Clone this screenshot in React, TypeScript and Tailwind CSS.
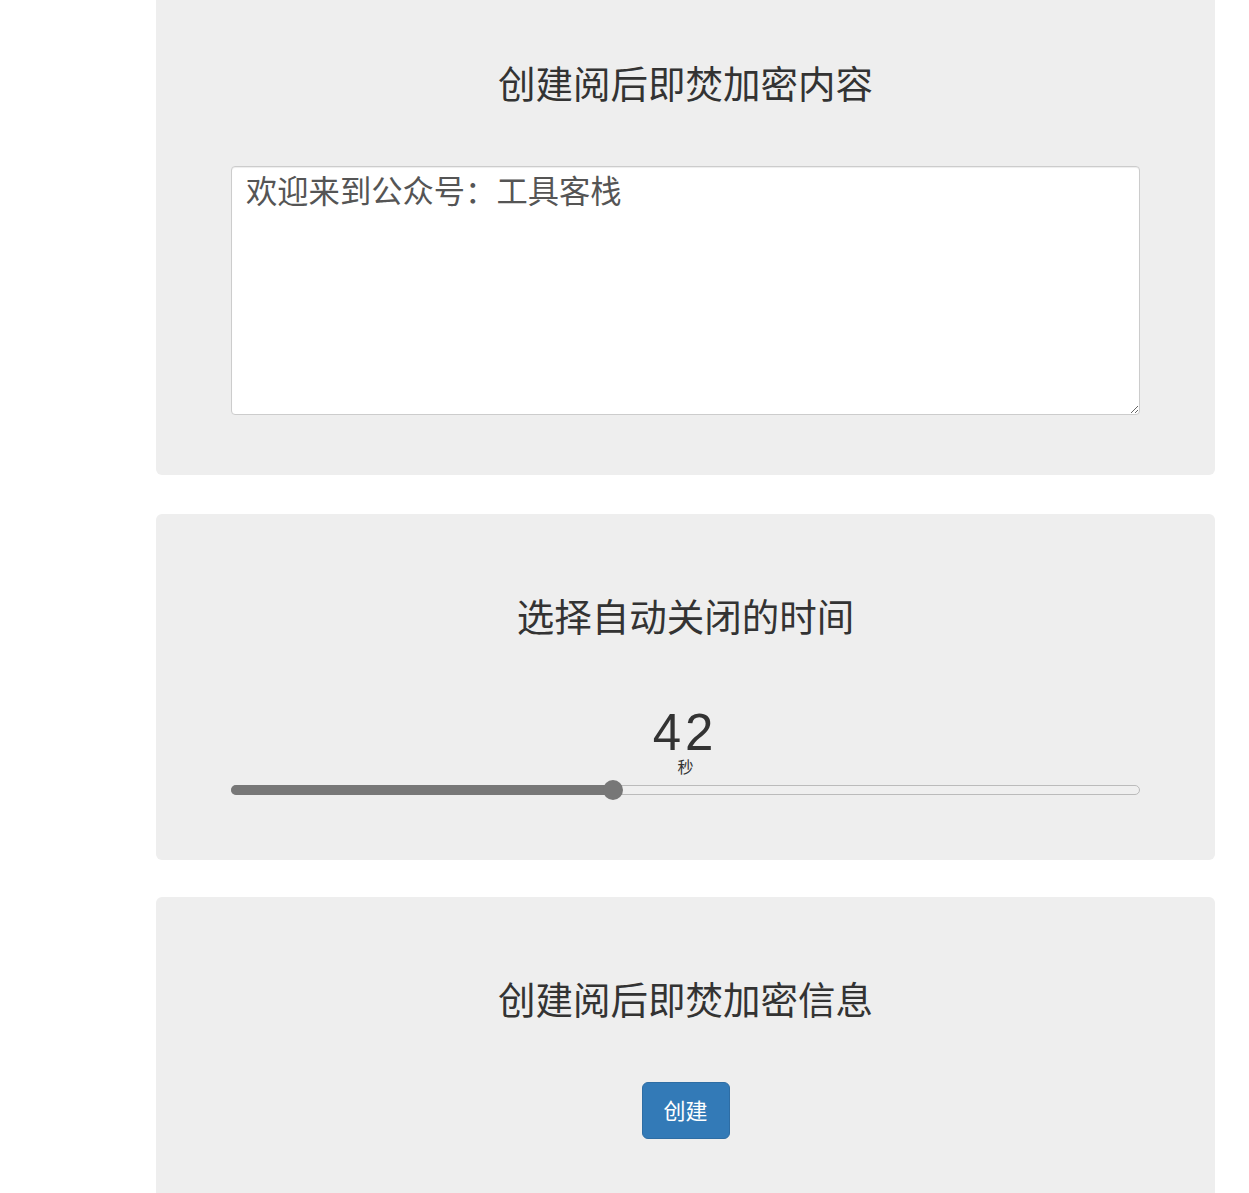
import { useState } from "react"

const cjk = "font-['Noto_Sans_CJK_SC','Noto_Sans',sans-serif]"

export default function App() {
  const [seconds] = useState(42)
  const pct = seconds

  return (
    <div className={`min-h-[1193px] bg-white ${cjk} text-[#333]`}>
      {/* content panel */}
      <section className="ml-[156px] w-[1059px] rounded-b-[6px] bg-[#eee] pt-[61px] pb-[60px]">
        <h1 className="text-center text-[37.5px] leading-[42px] font-normal">创建阅后即焚加密内容</h1>
        <div className="mx-[75px] mt-[63px]">
          <textarea
            defaultValue="欢迎来到公众号：工具客栈"
            className={`block h-[249px] w-full rounded-[4px] border border-[#ccc] bg-white pl-[14px] pr-[13px] pt-[1px] pb-[4px] text-[31.3px] leading-[44px] text-[#555] shadow-[inset_0_1px_1px_rgba(0,0,0,0.075)] outline-none ${cjk}`}
          />
        </div>
      </section>

      {/* timer panel */}
      <section className="mt-[39px] ml-[156px] w-[1059px] rounded-[6px] bg-[#eee] pt-[80px] pb-[61px]">
        <h1 className="text-center text-[37.5px] leading-[42px] font-normal">选择自动关闭的时间</h1>
        <div className="mt-[72px] text-center font-['Liberation_Sans',sans-serif] text-[51px] leading-[50px] tracking-[4px] pr-[1px]">
          {seconds}
        </div>
        <div className="text-center text-[16px] leading-[16px] text-[#333]">秒</div>
        <div className="relative mx-[75px] mt-[7px] h-[18px]">
          <div className="absolute inset-x-0 top-[4px] h-[10px] rounded-full border border-[#bbb] bg-[#efefef]" />
          <div
            className="absolute left-0 top-[4px] h-[10px] rounded-l-full bg-[#777]"
            style={{ width: `${pct}%` }}
          />
          <div
            className="absolute -top-[1px] h-[20px] w-[20px] -translate-x-1/2 rounded-full bg-[#777]"
            style={{ left: `${pct}%` }}
          />
        </div>
      </section>

      {/* create panel */}
      <section className="mt-[37px] ml-[156px] w-[1059px] rounded-t-[6px] bg-[#eee] pt-[80px] pb-[60px]">
        <h1 className="text-center text-[37.5px] leading-[42px] font-normal">创建阅后即焚加密信息</h1>
        <div className="mt-[63px] flex justify-center">
          <button className="flex h-[57px] w-[88px] items-center justify-center rounded-[6px] border border-[#2e6da4] bg-[#337ab7] pb-[3px] text-[22px] text-white">
            创建
          </button>
        </div>
      </section>
    </div>
  )
}
